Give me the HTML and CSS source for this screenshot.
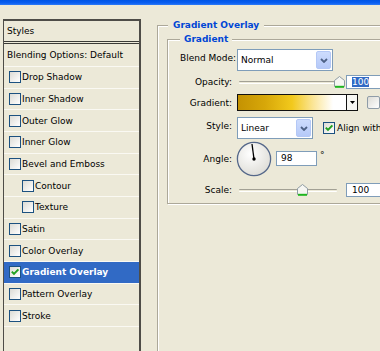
FILE: index.html
```html
<!DOCTYPE html>
<html lang="en">
<head>
    <meta charset="UTF-8">
    <title>Layer Style</title>
    <link rel="stylesheet" href="styles.css">
</head>
<body>
    <div class="title-bar"></div>
    <div class="dialog">
        <div class="style-list">
            <div class="style-item head">Styles</div>
            <div class="style-item blend">Blending Options: Default</div>
            <div class="style-item"><span class="cb"></span>Drop Shadow</div>
            <div class="style-item"><span class="cb"></span>Inner Shadow</div>
            <div class="style-item"><span class="cb"></span>Outer Glow</div>
            <div class="style-item"><span class="cb"></span>Inner Glow</div>
            <div class="style-item"><span class="cb"></span>Bevel and Emboss</div>
            <div class="style-item sub"><span class="cb"></span>Contour</div>
            <div class="style-item sub"><span class="cb"></span>Texture</div>
            <div class="style-item"><span class="cb"></span>Satin</div>
            <div class="style-item"><span class="cb"></span>Color Overlay</div>
            <div class="style-item active">
                <span class="cb"><svg width="10" height="10" viewBox="0 0 10 10"><path d="M1.8 4.6 L4 6.9 L8.4 2.4" stroke="#21a121" stroke-width="2" fill="none"/></svg></span>Gradient Overlay
            </div>
            <div class="style-item"><span class="cb"></span>Pattern Overlay</div>
            <div class="style-item"><span class="cb"></span>Stroke</div>
        </div>

        <div class="group group-outer">
            <div class="legend legend-outer">Gradient Overlay</div>
            <div class="group group-inner">
                <div class="legend">Gradient</div>

                <div class="row row-blend">
                    <span class="label">Blend Mode:</span>
                    <div class="select select-blend">
                        <span class="select-text">Normal</span>
                        <span class="select-btn"><svg width="8" height="5" viewBox="0 0 8 5"><path d="M1 1 L4 4 L7 1" stroke="#4d6185" stroke-width="1.8" fill="none"/></svg></span>
                    </div>
                </div>

                <div class="row row-opacity">
                    <span class="label">Opacity:</span>
                    <div class="slider">
                        <span class="thumb" style="left: 95px;"><svg width="11" height="12" viewBox="0 0 11 12"><path d="M0.5 4.5 L5.5 0.5 L10.5 4.5 V10.5 H0.5 Z" fill="#f6f6f2" stroke="#8e9ba3"/><path d="M1 10.8 H10" stroke="#1fb51f" stroke-width="2"/></svg></span>
                    </div>
                    <div class="field field-num"><span class="sel">100</span></div>
                </div>

                <div class="row row-gradient">
                    <span class="label">Gradient:</span>
                    <div class="grad">
                        <div class="grad-swatch"></div>
                        <div class="grad-arrow"><svg width="5" height="3" viewBox="0 0 5 3"><path d="M0 0 H5 L2.5 3 Z" fill="#000"/></svg></div>
                    </div>
                    <span class="cb cb-reverse"></span>
                </div>

                <div class="row row-style">
                    <span class="label">Style:</span>
                    <div class="select select-style">
                        <span class="select-text">Linear</span>
                        <span class="select-btn"><svg width="8" height="5" viewBox="0 0 8 5"><path d="M1 1 L4 4 L7 1" stroke="#4d6185" stroke-width="1.8" fill="none"/></svg></span>
                    </div>
                    <span class="cb cb-align"><svg width="10" height="10" viewBox="0 0 10 10"><path d="M1.8 4.6 L4 6.9 L8.4 2.4" stroke="#21a121" stroke-width="2" fill="none"/></svg></span>
                    <span class="check-text">Align with Layer</span>
                </div>

                <div class="row row-angle">
                    <span class="label">Angle:</span>
                    <svg class="dial" width="36" height="36" viewBox="0 0 36 36">
                        <defs>
                            <radialGradient id="dialFill" cx="40%" cy="35%" r="70%">
                                <stop offset="0" stop-color="#ffffff"/>
                                <stop offset="1" stop-color="#dddcd6"/>
                            </radialGradient>
                        </defs>
                        <circle cx="18" cy="18" r="16.6" fill="url(#dialFill)" stroke="#55688a" stroke-width="1.3"/>
                        <line x1="18" y1="18" x2="16" y2="3" stroke="#000" stroke-width="1.3"/>
                        <circle cx="18" cy="18" r="1.7" fill="#000"/>
                    </svg>
                    <div class="field field-angle">98</div>
                    <span class="deg">°</span>
                </div>

                <div class="row row-scale">
                    <span class="label">Scale:</span>
                    <div class="slider">
                        <span class="thumb" style="left: 58px;"><svg width="11" height="12" viewBox="0 0 11 12"><path d="M0.5 4.5 L5.5 0.5 L10.5 4.5 V10.5 H0.5 Z" fill="#f6f6f2" stroke="#8e9ba3"/><path d="M1 10.8 H10" stroke="#1fb51f" stroke-width="2"/></svg></span>
                    </div>
                    <div class="field field-num">100</div>
                </div>
            </div>
        </div>
    </div>
</body>
</html>
```

FILE: styles.css
```css
body {
    margin: 0;
    width: 380px;
    height: 351px;
    overflow: hidden;
    background-color: #ece9d8;
    font-family: "DejaVu Sans", sans-serif;
    font-size: 9px;
    line-height: 12px;
    color: #000;
}
.title-bar {
    height: 5px;
    background: linear-gradient(#0055e5, #0a5ff2 60%, #2f7cf6);
}
.dialog {
    display: flex;
    align-items: flex-start;
    gap: 16px;
    padding-left: 3px;
}

/* left list */
.style-list {
    flex: none;
    width: 138px;
    height: 400px;
    margin-top: 14px;
    box-sizing: border-box;
    border: 2px solid #4e4d48;
    border-left-width: 1px;
}
.style-item {
    height: 20.67px;
    display: flex;
    align-items: center;
    gap: 1px;
    padding-left: 5px;
    border-bottom: 1px solid #faf9f3;
    white-space: nowrap;
}
.style-item.head {
    height: 20px;
    padding-left: 3px;
    border-bottom: 3px double #3a3a36;
}
.style-item.blend {
    height: 22px;
    padding-left: 3px;
}
.style-item.sub {
    padding-left: 18px;
}
.style-item.active {
    background-color: #316ac5;
    color: #fff;
    font-weight: bold;
}
.cb {
    flex: none;
    width: 12px;
    height: 12px;
    box-sizing: border-box;
    border: 1px solid #1c5180;
    background: linear-gradient(135deg, #dcdbd5, #fff);
    display: flex;
    align-items: center;
    justify-content: center;
}

/* group boxes */
.group {
    box-sizing: border-box;
    border: 1px solid #aca899;
    box-shadow: inset 1px 1px 0 #fff, 1px 1px 0 #fff;
}
.group-outer {
    flex: none;
    width: 260px;
    min-height: 400px;
    margin-top: 20px;
    padding-left: 9px;
}
.group-inner {
    width: 230px;
    margin-top: 8px;
    padding: 0 0 6px 12px;
}
.legend {
    display: block;
    width: max-content;
    margin-top: -7px;
    padding: 0 4px;
    background-color: #ece9d8;
    color: #0046d5;
    font-weight: bold;
    line-height: 12px;
}
.legend-outer {
    margin-left: 1px;
    padding: 0 5px;
}

/* form rows */
.row {
    display: flex;
    align-items: center;
    white-space: nowrap;
}
.label {
    flex: none;
    width: 52px;
    margin-right: 5px;
    text-align: right;
}
.row-blend {
    margin-top: 4px;
    height: 22px;
}
.row-opacity {
    margin-top: 4px;
    height: 14px;
}
.row-gradient {
    margin-top: 5px;
    height: 17px;
}
.row-style {
    margin-top: 6px;
    height: 22px;
}
.row-angle {
    margin-top: 2px;
    height: 35px;
}
.row-scale {
    margin-top: 7px;
    height: 14px;
}
.row-blend .label,
.row-style .label {
    margin-bottom: 5px;
}

.select {
    flex: none;
    display: flex;
    align-items: stretch;
    height: 22px;
    box-sizing: border-box;
    border: 1px solid #7f9db9;
    background-color: #fff;
    padding: 1px;
}
.select-blend {
    width: 96px;
}
.select-style {
    width: 76px;
}
.select-text {
    flex: 1;
    padding-left: 2px;
    display: flex;
    align-items: center;
}
.select-btn {
    width: 15px;
    box-sizing: border-box;
    border: 1px solid #b4c8f6;
    border-radius: 2px;
    background: linear-gradient(#cddcfd, #b5c9f8);
    display: flex;
    align-items: center;
    justify-content: center;
}

.slider {
    flex: none;
    position: relative;
    width: 98px;
    height: 1px;
    margin-left: 2px;
    border-top: 1px solid #a3a195;
    border-bottom: 1px solid #fff;
    border-radius: 1px;
}
.thumb {
    position: absolute;
    top: -6px;
    display: block;
    height: 12px;
}
.thumb svg {
    display: block;
}

.field {
    flex: none;
    box-sizing: border-box;
    height: 14px;
    border: 1px solid #7f9db9;
    background-color: #fff;
    padding-left: 5px;
    line-height: 12px;
}
.field-num {
    width: 40px;
    margin-left: 9px;
}
.sel {
    background-color: #316ac5;
    color: #fff;
}
.field-angle {
    width: 41px;
    height: 15px;
    margin-left: 4px;
    padding-left: 4px;
    line-height: 13px;
}
.deg {
    margin-left: 3px;
    margin-bottom: 8px;
}

.grad {
    flex: none;
    display: flex;
    width: 121px;
    height: 17px;
    box-sizing: border-box;
    border: 1px solid #111;
}
.grad-swatch {
    flex: 1;
    background: linear-gradient(to right, #c49202 0%, #d7a709 25%, #f2c91c 50%, #fbe69a 70%, #fff 88%);
}
.grad-arrow {
    width: 10px;
    border-left: 1px solid #111;
    background-color: #f7f7f3;
    display: flex;
    align-items: center;
    justify-content: center;
}
.cb-reverse {
    width: 13px;
    height: 13px;
    margin-left: 9px;
    border-color: #8f9ca8;
    border-radius: 2px;
}
.cb-align {
    margin-left: 10px;
}
.check-text {
    margin-left: 2px;
}
.dial {
    flex: none;
    margin-left: -1px;
}
```
